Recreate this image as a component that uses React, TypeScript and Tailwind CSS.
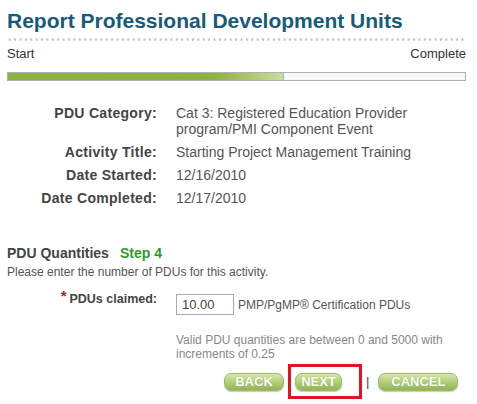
export default function App() {
  const rows: { label: string; value: string[] }[] = [
    { label: "PDU Category:", value: ["Cat 3: Registered Education Provider", "program/PMI Component Event"] },
    { label: "Activity Title:", value: ["Starting Project Management Training"] },
    { label: "Date Started:", value: ["12/16/2010"] },
    { label: "Date Completed:", value: ["12/17/2010"] },
  ];

  const btn =
    "h-[18px] rounded-[7px] border border-[#9cba6c] bg-gradient-to-b from-[#d6e8aa] via-[#b2cf78] to-[#92b455] text-[13px] leading-[16px] font-bold text-white [text-shadow:0_0_1px_#7d9c45] shadow-[0_1px_1px_#c8c8c8]";

  return (
    <div className="w-[477px] h-[404px] bg-white text-[#444] font-['Liberation_Sans',Arial,sans-serif] pl-[7px] pr-[11px]">
      <h1 className="pt-[9px] text-[21px] leading-[24px] font-bold text-[#165a7c]">
        Report Professional Development Units
      </h1>

      {/* dotted divider */}
      <div className="mt-[5px] h-[3px] bg-[radial-gradient(circle,#c2c2c2_1px,transparent_1.4px)] bg-[length:5.4px_3px] bg-repeat-x" />

      <div className="mt-[6px] flex justify-between text-[13px] leading-[14px] text-[#333]">
        <span>Start</span>
        <span>Complete</span>
      </div>

      {/* progress bar */}
      <div className="mt-[11px] h-[9px] flex border border-[#b0b0b0] bg-[#f8f8f8]">
        <div className="w-[276px] h-full bg-[linear-gradient(to_right,#8bb03c_0%,#8fb33f_75%,#c9dca2_100%)] border-r border-[#b0b0b0]" />
      </div>

      {/* details */}
      <div className="mt-[24px] flex flex-col gap-[7px] text-[14px] leading-[16px]">
        {rows.map((r) => (
          <div key={r.label} className="flex">
            <div className="w-[150px] text-right font-bold text-[#444] tracking-[0.3px]">{r.label}</div>
            <div className="ml-[19px] text-[#555]">
              {r.value.map((v) => (
                <div key={v}>{v}</div>
              ))}
            </div>
          </div>
        ))}
      </div>

      {/* PDU quantities */}
      <div className="mt-[39px] flex items-baseline text-[14px] leading-[16px] font-bold">
        <span className="text-[#444]">PDU Quantities</span>
        <span className="ml-[11px] text-[#2a9e2a]">Step 4</span>
      </div>
      <div className="mt-[4px] text-[12px] leading-[14px] text-[#555]">
        Please enter the number of PDUs for this activity.
      </div>

      <div className="mt-[9px] flex">
        <div className="w-[150px] flex justify-end text-[12.5px] leading-[16px] font-bold text-[#444]">
          <span className="text-[#b01c2e] text-[15px] mr-[3px]">*</span>
          <span className="pt-[3px]">PDUs claimed:</span>
        </div>
        <div className="ml-[19px] mt-[6px] flex items-center">
          <div className="w-[58px] h-[21px] border border-[#aaa] pl-[5px] text-[13px] leading-[19px] text-[#444]">
            10.00
          </div>
          <span className="ml-[4px] text-[12px] text-[#555]">PMP/PgMP® Certification PDUs</span>
        </div>
      </div>

      <div className="mt-[18px] ml-[169px] text-[12px] leading-[14px] text-[#888]">
        Valid PDU quantities are between 0 and 5000 with
        <br />
        increments of 0.25
      </div>

      {/* buttons */}
      <div className="mt-[3px] flex items-center">
        <button className={`ml-[217px] w-[60px] ${btn}`}>BACK</button>
        <div className="ml-[4px] flex border-[3px] border-[#e0141c] px-[4px] pt-[6px] pb-[5px] w-[74px]">
          <button className={`w-[47px] ${btn}`}>NEXT</button>
        </div>
        <span className="ml-[4px] text-[13px] leading-[16px] text-[#444]">|</span>
        <button className={`ml-[9px] w-[80px] ${btn}`}>CANCEL</button>
      </div>
    </div>
  );
}
